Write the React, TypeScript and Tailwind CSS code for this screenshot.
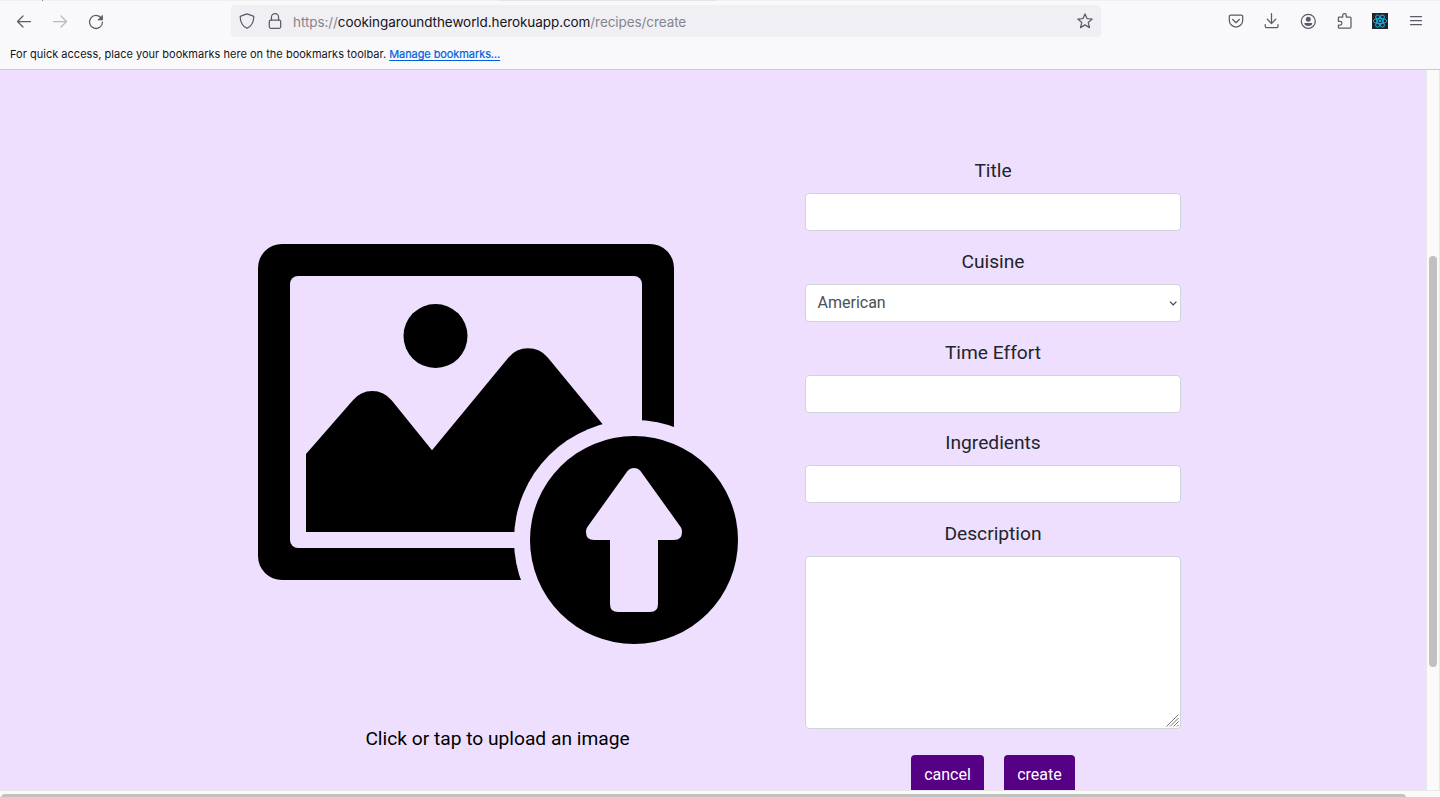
import type { ReactNode } from 'react';

function Icon({ children, className = '' }: { children: ReactNode; className?: string }) {
  return (
    <svg
      viewBox="0 0 16 16"
      className={`size-4 shrink-0 overflow-visible text-[#5b5b66] ${className}`}
      fill="none"
      stroke="currentColor"
      strokeWidth="1.25"
      strokeLinecap="round"
      strokeLinejoin="round"
    >
      {children}
    </svg>
  );
}

function Toolbar() {
  return (
    <div className="flex h-[40px] items-center">
      <div className="ml-4 flex w-[88px] items-center justify-between pt-[2px]">
        <Icon>
          <path d="M14.5 7.5H1.5M7 2 1.5 7.500 7 13" />
        </Icon>
        <Icon className="opacity-40">
          <path d="M1.5 7.500h13M9 2 14.5 7.500 9 13" />
        </Icon>
        <Icon>
          <path d="M13.3 4.2A6.5 6.5 0 1 0 14.5 8" />
          <path d="M14.5 1.6v4.3h-4.3z" fill="currentColor" strokeWidth="0.8" />
        </Icon>
      </div>
      <div className="ml-[127px] flex h-8 w-[870px] shrink-0 items-center rounded bg-[#f0f0f4] px-2">
        <Icon>
          <path d="M8 .9 14.3 3.2q.6.2.5 1C14.5 9.700 12.500 13.200 8 15.300 3.500 13.200 1.500 9.700 1.200 4.200q-.1-.8.5-1z" />
        </Icon>
        <Icon className="ml-3">
          <rect x="2.3" y="7" width="11.400" height="8.300" rx="1.500" />
          <path d="M4.400 7V4.500a3.600 3.900 0 0 1 7.200 0V7" />
        </Icon>
        <div className="ml-[10px] grow pt-[2px] whitespace-nowrap font-['Inter','Liberation_Sans',sans-serif] text-[13.5px] leading-5 tracking-[-0.08px] text-[#85858c]">
          https://<span className="text-[#15141a]">cookingaroundtheworld.herokuapp.com</span>/recipes/create
        </div>
        <Icon>
          <path d="m8 .9 2 4.700 5.200.4-4 3.400 1.300 5.200L8 11.900l-4.500 2.700 1.300-5.200-4-3.400L6 5.600z" />
        </Icon>
      </div>
      <div className="ml-[127px] flex w-[196px] shrink-0 items-center justify-between">
        <Icon>
          <path d="M2.800 2.100h10.400q1.500 0 1.500 1.500v3.700a6.700 6.700 0 0 1-13.400 0V3.600q0-1.500 1.500-1.500z" />
          <path d="M4.700 6.500 8 9.700l3.300-3.200" />
        </Icon>
        <Icon>
          <path d="M7.500.6v9.900M3.300 6.200l4.200 4.400 4.200-4.400M1.200 11.500v1.800q0 1.300 1.300 1.300h10.200q1.300 0 1.300-1.300v-1.800" />
        </Icon>
        <Icon>
          <circle cx="8.300" cy="8.300" r="7" />
          <circle cx="8.300" cy="6.300" r="2.500" fill="currentColor" stroke="none" />
          <path d="M4.300 9.900h8q0 3-4 3t-4-3z" fill="currentColor" stroke="none" />
        </Icon>
        <Icon>
          <path d="M2.400 6.500V4.800q0-.8.800-.8H6.700V2.500a1.800 1.800 0 0 1 3.600 0V4h3.800q.9 0 .9.900v9q0 1.200-1.200 1.200H3.300q-.9 0-.9-.9V12h1.700a1.700 1.700 0 0 0 0-3.700H2.400z" />
        </Icon>
        <svg viewBox="0 0 16 16" className="size-4 shrink-0 bg-[#20232a]" fill="none" stroke="#18b8ea" strokeWidth="0.9">
          <ellipse cx="8" cy="8" rx="6.800" ry="2.600" />
          <ellipse cx="8" cy="8" rx="6.800" ry="2.600" transform="rotate(60 8 8)" />
          <ellipse cx="8" cy="8" rx="6.800" ry="2.600" transform="rotate(120 8 8)" />
          <circle cx="8" cy="8" r="1.200" fill="#18b8ea" stroke="none" />
        </svg>
        <Icon>
          <path d="M2.500 3.500h11M2.500 7.500h11M2.500 11.500h11" />
        </Icon>
      </div>
    </div>
  );
}

function BrowserChrome() {
  return (
    <header className="h-[70px] shrink-0 border-b border-[#cccbd0] bg-[#f9f9fb]">
      <div className="flex h-px bg-[#f0f0f2]">
        <div className="ml-[42px] h-px w-px bg-[#88888c]" />
        <div className="ml-[455px] h-px w-[219px] bg-[#e5e5e9]" />
      </div>
      <Toolbar />
      <div className="flex h-[27px] items-center gap-[3px] pl-[10px] font-['Inter','Liberation_Sans',sans-serif] text-[11px] text-[#15141a]">
        <span className="tracking-[0.015px]">For quick access, place your bookmarks here on the bookmarks toolbar.</span>
        <a className="tracking-[-0.08px] text-[#0061e0] underline underline-offset-2 [-webkit-text-stroke:0.2px_#0061e0]">Manage bookmarks…</a>
      </div>
    </header>
  );
}

function UploadPicture() {
  return (
    <svg viewBox="258 244 480 400" className="h-[400px] w-[480px]">
      <rect x="258" y="244" width="416" height="336" rx="24" />
      <rect x="290" y="276" width="352" height="272" rx="8" fill="#eedfff" />
      <circle cx="435.500" cy="336" r="32" />
      <path d="M306 532V454L352.700 400.500A25 25 0 0 1 391.800 400.500L432 450.300 508.500 357.500A25.200 25.200 0 0 1 547.700 357.500L602.500 424 620 532Z" />
      <circle cx="634" cy="540" r="120" fill="#eedfff" />
      <circle cx="634" cy="540" r="104" />
      <path
        d="M627.500 471Q630 468 634 468T640.500 471L681 527.500Q682 529.500 682 532 682 540 674 540H658V604Q658 612 650 612H618Q610 612 610 604V540H594Q586 540 586 532 586 529.500 587 527.500Z"
        fill="#eedfff"
      />
    </svg>
  );
}

const control = 'h-[38px] w-full rounded border border-[#ced4da] bg-white';

function Field({ label, children }: { label: string; children: ReactNode }) {
  return (
    <label className="mb-4 block">
      <span className="mb-[7.25px] block pt-[0.75px] text-center text-[19.2px] leading-[28.8px] text-[#212529]">{label}</span>
      {children}
    </label>
  );
}

function RecipeForm() {
  return (
    <form className="mt-[86.2px] ml-[67px] w-[376px] shrink-0">
      <Field label="Title">
        <input className={`block ${control}`} />
      </Field>
      <Field label="Cuisine">
        <span className={`flex items-center pr-[3.5px] pl-[11.5px] text-[#495057] ${control}`}>
          <span className="grow text-[16px] leading-6">American</span>
          <svg viewBox="0 0 8 8" className="size-2" fill="none" stroke="#3c4248" strokeWidth="1.2">
            <path d="m1 2.700 3.200 3.200 3.200-3.200" />
          </svg>
        </span>
      </Field>
      <Field label="Time Effort">
        <input className={`block ${control}`} />
      </Field>
      <Field label="Ingredients">
        <input className={`block ${control}`} />
      </Field>
      <Field label="Description">
        <span className="flex h-[173px] w-full items-end justify-end rounded border border-[#ced4da] bg-white">
          <svg viewBox="0 0 14 14" className="size-[14px]" fill="none" stroke="#777" strokeWidth="1">
            <path d="M.5 12.500 12.500.5M4 12.500 12.500 4M7.500 12.500l5-5M11 12.500l1.500-1.500" />
          </svg>
        </span>
      </Field>
      <div className="mt-[26px] flex justify-center gap-5 text-[16px] leading-6 text-white">
        <button type="button" className="h-[38px] w-[73px] rounded bg-[#560085] pt-[2px]">cancel</button>
        <button type="button" className="h-[38px] w-[71px] rounded bg-[#560085] pt-[2px]">create</button>
      </div>
    </form>
  );
}

export default function App() {
  return (
    <div className="flex h-[797px] w-[1440px] flex-col overflow-hidden bg-[#fafafa]">
      <BrowserChrome />
      <div className="flex h-[720px] shrink-0">
        <main className="flex w-[1426px] shrink-0 items-start overflow-hidden bg-[#eedfff] font-['Roboto',sans-serif]">
          <section className="mt-[174px] ml-[258px] flex w-[480px] shrink-0 flex-col">
            <UploadPicture />
            <p className="mt-[81px] -ml-px text-center text-[19.2px] leading-[28.8px] text-black">Click or tap to upload an image</p>
          </section>
          <RecipeForm />
        </main>
        <div className="w-[14px] shrink-0 border-x border-[#e8e8e8] pt-[186px] pl-[2px]">
          <div className="h-[411px] w-2 rounded-full bg-[#c1c1c1]" />
        </div>
      </div>
      <div className="h-[7px] w-full shrink-0 overflow-hidden border-t border-[#e8e8e8] pt-[3px] pl-px">
        <div className="h-2 w-[1405px] rounded-full bg-[#c1c1c1]" />
      </div>
    </div>
  );
}
